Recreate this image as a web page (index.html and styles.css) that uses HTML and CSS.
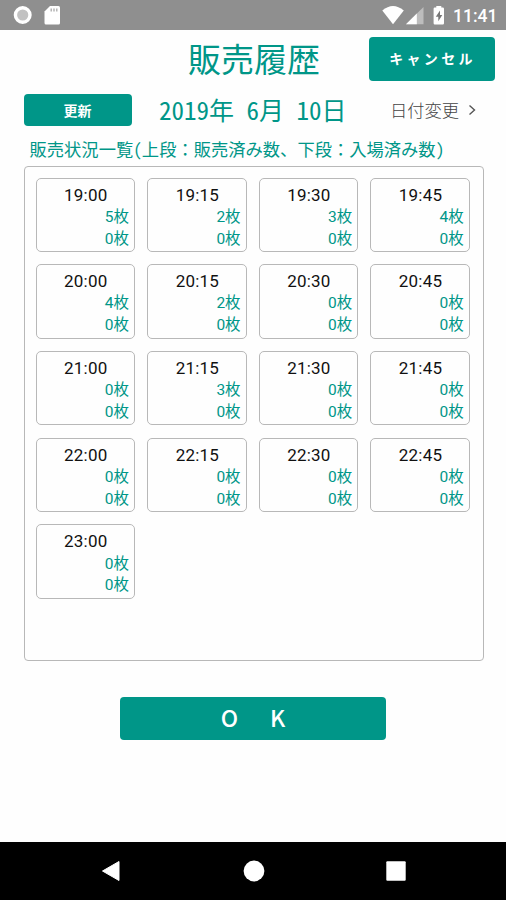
FILE: index.html
```html
<!DOCTYPE html>
<html lang="ja">
<head>
<meta charset="utf-8">
<title>販売履歴</title>
<link rel="stylesheet" href="styles.css">
</head>
<body>
<div class="status">
  <svg class="status-left" width="70" height="30" viewBox="0 0 70 30">
    <circle cx="22.7" cy="15" r="7.3" fill="#c2c2c2" stroke="#fff" stroke-width="3.4"/>
    <path d="M50 6h8.500q1.500 0 1.500 1.500v15.500q0 1.500-1.500 1.500h-12.500q-1.500 0-1.500-1.500v-11.500z" fill="#fff"/>
    <path d="M51.200 8.500v3M54 8.500v3M56.800 8.500v3" stroke="#aaa" stroke-width="1.300"/>
  </svg>
  <svg class="status-right" width="66" height="30" viewBox="0 0 66 30">
    <path d="M0.300 10.500Q11 1.500 21.800 10.500L11 24.300z" fill="#fff"/>
    <path d="M41.500 7v17.300H24z" fill="#bdbdbd"/>
    <path d="M34.800 13.600v10.700H24z" fill="#fff"/>
    <path d="M54.300 6h5v1.500h1.500q1.200 0 1.200 1.200v14.600q0 1.200-1.200 1.200h-8q-1.200 0-1.200-1.200v-14.600q0-1.200 1.200-1.200h1.500z" fill="#fff"/>
    <path d="M58 10.500l-4.200 6.300h2.500v4.500l4-6.300h-2.300z" fill="#777"/>
  </svg>
  <span class="clock">11:41</span>
</div>
<header class="head">
  <h1>販売履歴</h1>
  <button class="btn cancel">キャンセル</button>
</header>
<div class="datebar">
  <button class="btn refresh">更新</button>
  <div class="date">2019年 6月 10日</div>
  <div class="change">日付変更<svg width="8" height="12" viewBox="0 0 8 12"><path d="M1.500 1.500L6.500 6L1.500 10.500" fill="none" stroke="#555" stroke-width="1.400"/></svg></div>
</div>
<p class="caption">販売状況一覧<span class="half">(</span>上段：販売済み数、下段：入場済み数<span class="half">)</span></p>
<main class="panel">
  <div class="slot"><b>19:00</b><span>5枚</span><span>0枚</span></div>
  <div class="slot"><b>19:15</b><span>2枚</span><span>0枚</span></div>
  <div class="slot"><b>19:30</b><span>3枚</span><span>0枚</span></div>
  <div class="slot"><b>19:45</b><span>4枚</span><span>0枚</span></div>
  <div class="slot"><b>20:00</b><span>4枚</span><span>0枚</span></div>
  <div class="slot"><b>20:15</b><span>2枚</span><span>0枚</span></div>
  <div class="slot"><b>20:30</b><span>0枚</span><span>0枚</span></div>
  <div class="slot"><b>20:45</b><span>0枚</span><span>0枚</span></div>
  <div class="slot"><b>21:00</b><span>0枚</span><span>0枚</span></div>
  <div class="slot"><b>21:15</b><span>3枚</span><span>0枚</span></div>
  <div class="slot"><b>21:30</b><span>0枚</span><span>0枚</span></div>
  <div class="slot"><b>21:45</b><span>0枚</span><span>0枚</span></div>
  <div class="slot"><b>22:00</b><span>0枚</span><span>0枚</span></div>
  <div class="slot"><b>22:15</b><span>0枚</span><span>0枚</span></div>
  <div class="slot"><b>22:30</b><span>0枚</span><span>0枚</span></div>
  <div class="slot"><b>22:45</b><span>0枚</span><span>0枚</span></div>
  <div class="slot"><b>23:00</b><span>0枚</span><span>0枚</span></div>
</main>
<button class="btn ok"><span>O</span><span>K</span></button>
<nav class="nav">
  <svg width="20" height="22" viewBox="0 0 20 22"><path d="M18 1.500v19L1.500 11z" fill="#fff" stroke="#fff" stroke-linejoin="round"/></svg>
  <svg width="22" height="22" viewBox="0 0 22 22"><circle cx="11" cy="11" r="10.400" fill="#fff"/></svg>
  <svg width="20" height="20" viewBox="0 0 20 20"><rect x="0.300" y="0.300" width="19.400" height="19.400" rx="1" fill="#fff"/></svg>
</nav>
</body>
</html>
```

FILE: styles.css
```css
* { box-sizing: border-box; }
body {
  margin: 0;
  height: 900px;
  display: flex;
  flex-direction: column;
  background: #fefefe;
  color: #009688;
  font-family: "Noto Sans CJK JP", sans-serif;
}
.status {
  height: 30px;
  flex: none;
  display: flex;
  align-items: center;
  background: #8f8f8f;
  color: #fff;
}
.status-right { margin-left: auto; }
.clock {
  width: 44px;
  margin: 1px 9px 0 5px;
  font: 500 17.500px/30px Roboto, sans-serif;
  white-space: nowrap;
}
.btn {
  border: 0;
  padding: 0;
  border-radius: 4px;
  background: #009688;
  color: #fff;
  font-family: inherit;
  font-weight: 700;
}
.head {
  height: 64px;
  flex: none;
  display: flex;
  align-items: flex-start;
  padding: 7px 11px 0 188px;
  justify-content: space-between;
}
h1 {
  margin: -1px 0 0;
  font-size: 33px;
  line-height: 44px;
  font-weight: 400;
  white-space: nowrap;
}
.cancel {
  width: 126px;
  height: 44px;
  padding: 0 0 2px 1px;
  font-size: 14px;
  letter-spacing: 3.300px;
}
.datebar {
  height: 32px;
  flex: none;
  display: flex;
  align-items: center;
  padding-left: 24px;
}
.refresh {
  width: 108px;
  height: 32px;
  padding-right: 1px;
  font-size: 14px;
}
.date {
  width: 190px;
  margin: -2px 0 0 27px;
  font-size: 25px;
  line-height: 32px;
  font-feature-settings: "hwid";
  white-space: nowrap;
}
.change {
  display: flex;
  align-items: center;
  margin-left: 41px;
  gap: 9px;
  font-size: 17.300px;
  line-height: 32px;
  font-weight: 300;
  color: #444;
  white-space: nowrap;
}
.caption {
  margin: 10px 0 0 29.500px;
  height: 30px;
  flex: none;
  font-size: 17.300px;
  line-height: 26px;
  white-space: nowrap;
}
.half { font-feature-settings: "hwid"; }
.panel {
  width: 460px;
  height: 495px;
  flex: none;
  margin-left: 24px;
  padding: 10.500px 10.500px;
  border: 1.500px solid #b8b8b8;
  border-radius: 4px;
  display: grid;
  grid-template-columns: repeat(4, 99.500px);
  grid-auto-rows: 74.500px;
  gap: 12.200px 12.100px;
  align-content: start;
}
.slot {
  border: 1.500px solid #b8b8b8;
  border-radius: 5px;
  padding: 4px 5px 0 0;
  display: flex;
  flex-direction: column;
}
.slot b {
  font: 400 17px/24.300px Roboto, sans-serif;
  color: #111;
  letter-spacing: 0.200px;
  text-align: center;
  padding-left: 6px;
}
.slot span {
  font-family: Roboto, "Noto Sans CJK JP", sans-serif;
  font-size: 15.500px;
  line-height: 21.700px;
  text-align: right;
}
.ok {
  width: 266px;
  height: 43px;
  flex: none;
  margin: 36px 0 0 120px;
  padding-bottom: 2px;
  display: flex;
  align-items: center;
  justify-content: center;
  gap: 32px;
  font: 500 23px/41px "Noto Sans CJK JP", sans-serif;
}
.nav {
  height: 58px;
  flex: none;
  margin-top: auto;
  display: flex;
  align-items: center;
  justify-content: space-between;
  padding: 0 100px 0 101px;
  background: #000;
}
```
